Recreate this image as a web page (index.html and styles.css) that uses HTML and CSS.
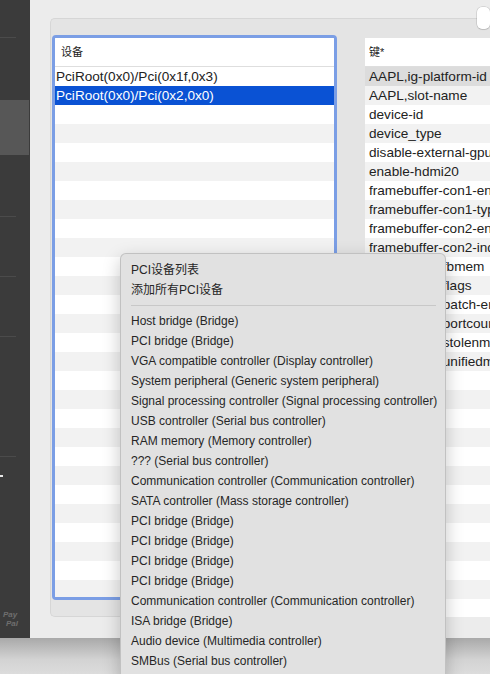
FILE: index.html
```html
<!DOCTYPE html>
<html>
<head>
<meta charset="utf-8">
<link rel="stylesheet" href="styles.css">
</head>
<body>
<div class="screen">
  <div class="window">
    <aside class="sidebar">
      <div class="sb-space h37"></div>
      <div class="sb-line"></div>
      <div class="sb-space h62"></div>
      <div class="sb-selected"></div>
      <div class="sb-space h61"></div>
      <div class="sb-line"></div>
      <div class="sb-space h59"></div>
      <div class="sb-line"></div>
      <div class="sb-space h59"></div>
      <div class="sb-line"></div>
      <div class="sb-space h119"></div>
      <div class="sb-line"></div>
      <div class="sb-space h18"></div>
      <div class="sb-dot"></div>
      <div class="sb-space h130"></div>
      <div class="sb-logo"><span>Pay</span><span>Pal</span></div>
    </aside>
    <main class="main">
      <div class="tabbar"><div class="tab"></div></div>
      <div class="box">
        <div class="focus">
          <div class="table">
            <div class="thead pad-h">设备</div>
            <div class="rows">
              <div class="row">PciRoot(0x0)/Pci(0x1f,0x3)</div>
              <div class="row sel">PciRoot(0x0)/Pci(0x2,0x0)</div>
              <div class="row"></div><div class="row"></div><div class="row"></div><div class="row"></div>
              <div class="row"></div><div class="row"></div><div class="row"></div><div class="row"></div>
              <div class="row"></div><div class="row"></div><div class="row"></div><div class="row"></div>
              <div class="row"></div><div class="row"></div><div class="row"></div><div class="row"></div>
              <div class="row"></div><div class="row"></div><div class="row"></div><div class="row"></div>
              <div class="row"></div><div class="row"></div><div class="row"></div><div class="row"></div>
              <div class="row"></div><div class="row"></div><div class="row"></div><div class="row"></div>
            </div>
          </div>
        </div>
        <div class="table right">
          <div class="thead pad-r">键*</div>
          <div class="rows r-pad">
            <div class="row grey">AAPL,ig-platform-id</div>
            <div class="row">AAPL,slot-name</div>
            <div class="row">device-id</div>
            <div class="row">device_type</div>
            <div class="row">disable-external-gpu</div>
            <div class="row">enable-hdmi20</div>
            <div class="row">framebuffer-con1-enable</div>
            <div class="row">framebuffer-con1-type</div>
            <div class="row">framebuffer-con2-enable</div>
            <div class="row">framebuffer-con2-index</div>
            <div class="row">framebuffer-fbmem</div>
            <div class="row">framebuffer-flags</div>
            <div class="row">framebuffer-patch-enable</div>
            <div class="row">framebuffer-portcount</div>
            <div class="row">framebuffer-stolenmem</div>
            <div class="row">framebuffer-unifiedmem</div>
            <div class="row"></div><div class="row"></div><div class="row"></div><div class="row"></div>
            <div class="row"></div><div class="row"></div><div class="row"></div><div class="row"></div>
            <div class="row"></div><div class="row"></div><div class="row"></div><div class="row"></div>
            <div class="row"></div>
          </div>
        </div>
      </div>
    </main>
  </div>
  <div class="desktop"></div>

  <div class="menu">
    <div class="item">PCI设备列表</div>
    <div class="item">添加所有PCI设备</div>
    <div class="sep"></div>
    <div class="item">Host bridge (Bridge)</div>
    <div class="item">PCI bridge (Bridge)</div>
    <div class="item">VGA compatible controller (Display controller)</div>
    <div class="item">System peripheral (Generic system peripheral)</div>
    <div class="item">Signal processing controller (Signal processing controller)</div>
    <div class="item">USB controller (Serial bus controller)</div>
    <div class="item">RAM memory (Memory controller)</div>
    <div class="item">??? (Serial bus controller)</div>
    <div class="item">Communication controller (Communication controller)</div>
    <div class="item">SATA controller (Mass storage controller)</div>
    <div class="item">PCI bridge (Bridge)</div>
    <div class="item">PCI bridge (Bridge)</div>
    <div class="item">PCI bridge (Bridge)</div>
    <div class="item">PCI bridge (Bridge)</div>
    <div class="item">Communication controller (Communication controller)</div>
    <div class="item">ISA bridge (Bridge)</div>
    <div class="item">Audio device (Multimedia controller)</div>
    <div class="item">SMBus (Serial bus controller)</div>
    <div class="item">Ethernet controller (Network controller)</div>
  </div>
</div>
</body>
</html>
```
FILE: styles.css
```css
html, body {
  margin: 0;
  padding: 0;
  overflow: hidden;
  width: 490px;
  height: 674px;
}
* { box-sizing: border-box; }
.screen {
  position: relative;
  width: 490px;
  height: 674px;
  overflow: hidden;
  font-family: "Liberation Sans", "Noto Sans CJK SC", sans-serif;
  color: #222;
}
.window {
  display: flex;
  height: 638px;
}
.sidebar {
  width: 30px;
  flex: none;
  background: #3b3b3b;
  display: flex;
  flex-direction: column;
}
.sb-space { flex: none; }
.h37 { height: 37px; }
.h62 { height: 62px; }
.h61 { height: 61px; }
.h59 { height: 59px; }
.h119 { height: 119px; }
.h18 { height: 18px; }
.h130 { height: 133px; }
.sb-line {
  height: 1px;
  width: 16px;
  background: #4b4b4b;
}
.sb-selected {
  height: 55px;
  width: 29px;
  background: #575757;
}
.sb-dot {
  width: 3px;
  height: 2px;
  background: #e8e8e8;
}
.sb-logo {
  display: flex;
  flex-direction: column;
  padding-left: 3px;
  font-size: 8px;
  line-height: 9px;
  font-weight: bold;
  font-style: italic;
  color: #6e6e6e;
}
.sb-logo span + span { padding-left: 3px; }

.main {
  flex: 1;
  min-width: 0;
  background: #ececec;
  padding: 7px 0 0 20px;
  display: flex;
  flex-direction: column;
  overflow: hidden;
}
.tabbar {
  height: 22px;
  margin-bottom: -11px;
  padding-left: 427px;
  position: relative;
  z-index: 1;
  display: flex;
}
.tab {
  width: 80px;
  height: 22px;
  background: #fff;
  border-radius: 5px;
  box-shadow: 0 0 0 0.5px rgba(0,0,0,0.18), 0 1px 1px rgba(0,0,0,0.08);
}
.box {
  height: 599px;
  border: 1px solid #d6d6d6;
  border-right: none;
  border-radius: 5px 0 0 5px;
  background: #e4e4e4;
  padding: 16px 0 0 1px;
  display: flex;
  gap: 28px;
}
.focus {
  flex: none;
  width: 285px;
  height: 565px;
  border: 3px solid #7b9ee5;
  border-radius: 4px;
  background: #fff;
  overflow: hidden;
}
.table {
  display: flex;
  flex-direction: column;
  height: 100%;
  overflow: hidden;
}
.table.right {
  flex: none;
  width: 200px;
  margin-top: 3px;
  height: 579px;
  background: #fff;
}
.thead {
  height: 29px;
  flex: none;
  border-bottom: 1px solid #dedede;
  background: #fff;
  font-size: 11px;
  line-height: 28px;
  color: #222;
}
.pad-h { padding-left: 6px; }
.pad-r { padding-left: 4px; }
.rows { display: flex; flex-direction: column; }
.row {
  height: 19px;
  flex: none;
  font-size: 13.6px;
  line-height: 19px;
  padding-left: 1px;
  white-space: nowrap;
  color: #222;
}
.r-pad .row { padding-left: 4px; }
.row:nth-child(even) { background: #f2f2f2; }
.row.sel { background: #0a52d4; color: #fff; }
.row.grey { background: #dcdcdc; }

.desktop {
  height: 36px;
  background: linear-gradient(#a9a9a9, #d3d3d3 60%, #dcdcdc);
}

.menu {
  position: absolute;
  left: 120px;
  top: 253px;
  width: 326px;
  padding: 6px 0;
  background: #e1e1e1;
  border: 1px solid rgba(0,0,0,0.14);
  border-radius: 6px;
  box-shadow: 0 6px 18px rgba(0,0,0,0.22);
}
.item {
  height: 20px;
  line-height: 20px;
  padding-left: 10px;
  font-size: 12px;
  color: #262626;
  white-space: nowrap;
}
.sep {
  height: 11px;
  margin: 0 9px 0 10px;
  border-top: 1px solid transparent;
  position: relative;
}
.sep::after {
  content: "";
  display: block;
  margin-top: 4px;
  height: 1px;
  background: #c8c8c8;
}
```
